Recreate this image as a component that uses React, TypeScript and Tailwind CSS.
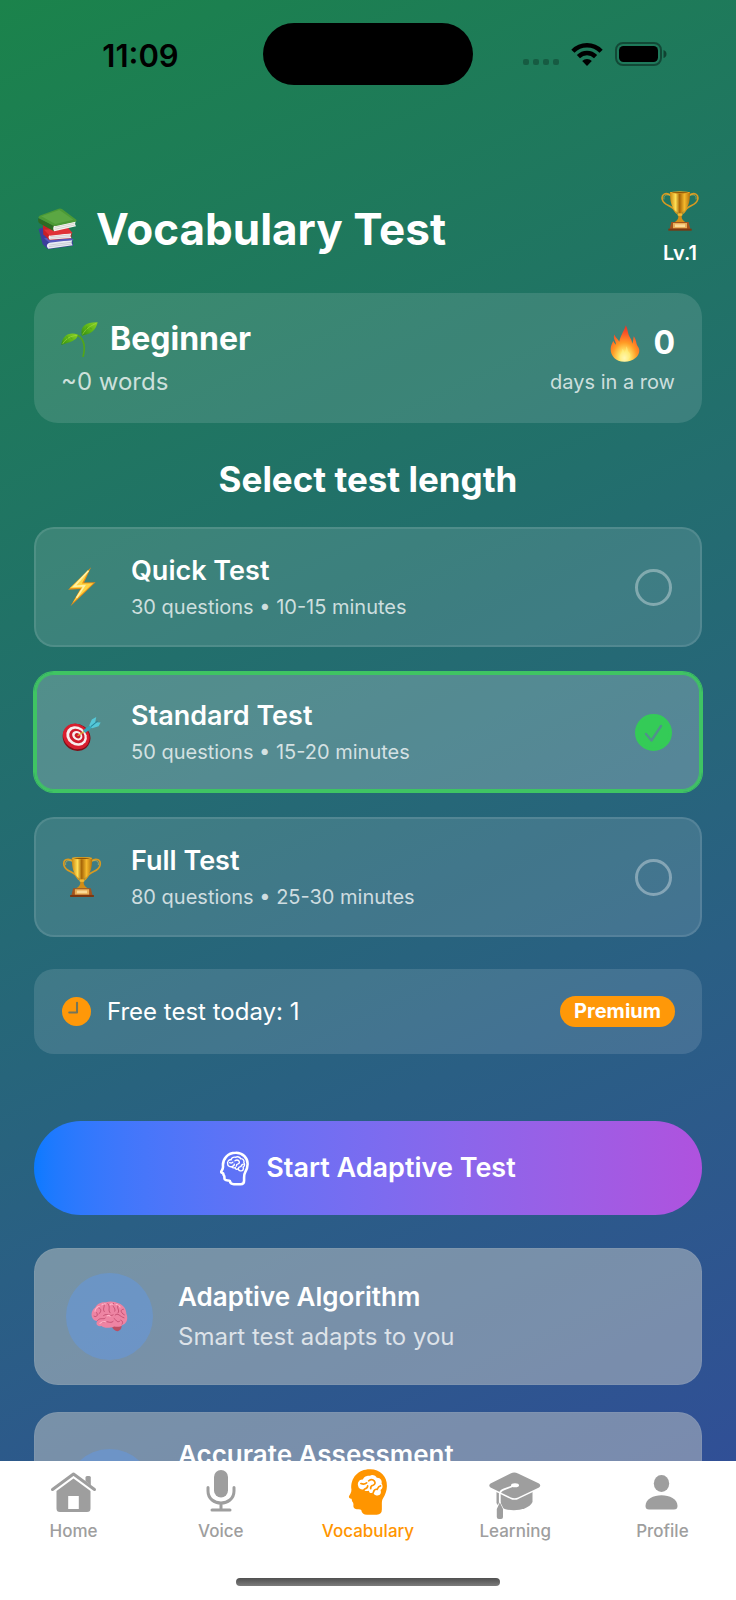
import { useState, type ReactNode } from "react";

type IconProps = { className?: string };

function BooksIcon({ className }: IconProps) {
  return (
    <svg viewBox="0 0 120 124" className={className} aria-hidden="true">
      <path d="M2 62 L14 108 L30 123 L105 112 L104 96 L30 92 L14 58 Z" fill="#3b3f9c" />
      <path d="M28 108 Q24 115 31 121 L104 111 Q98 104 103 96 L40 98 Z" fill="#e9ecf2" />
      <path d="M34 110 L100 102 M33 115 L101 107" stroke="#a9adba" strokeWidth="1.5" />
      <path d="M18 90 L90 84 L108 94 L34 103 Z" fill="#5658bd" />
      <path d="M14 40 L16 78 L34 96 L100 90 L101 74 L90 60 Z" fill="#c91f27" />
      <path d="M34 80 Q29 88 35 94 L100 89 Q95 82 100 75 Z" fill="#f3f1f2" />
      <path d="M37 85 L96 80 M37 90 L97 85" stroke="#b9afb3" strokeWidth="1.5" />
      <path d="M18 64 L90 58 L104 74 L35 82 Z" fill="#e03238" />
      <path d="M1 30 Q-1 38 3 44 L48 69 L50 52 Z" fill="#2c6b23" />
      <path d="M48 52 Q43 62 49 69 L114 54 Q109 47 113 39 Z" fill="#f4f4f0" />
      <path d="M50 57 L110 45 M50 63 L110 50" stroke="#b4b5ae" strokeWidth="1.5" />
      <path d="M2 25 Q4 22 10 20 L62 1 Q68 -1 73 3 L115 34 Q118 38 112 40 L54 53 Q48 54 43 51 L3 30 Q0 28 2 25 Z" fill="#4c9a36" />
      <path d="M10 24 L64 5 L106 34 L52 47 Z" fill="#62ad48" opacity=".7" />
    </svg>
  );
}

function TrophyIcon({ className }: IconProps) {
  return (
    <svg viewBox="0 0 114 118" className={className} aria-hidden="true">
      <defs>
        <linearGradient id="cup" x1="0" x2="1">
          <stop offset="0" stopColor="#c98610" />
          <stop offset=".28" stopColor="#ffdf55" />
          <stop offset=".48" stopColor="#a86607" />
          <stop offset=".72" stopColor="#f4b92c" />
          <stop offset="1" stopColor="#b3720c" />
        </linearGradient>
      </defs>
      <path d="M30 12 C14 1 0 9 4 25 C8 42 27 41 38 53 C43 60 45 66 50 67" fill="none" stroke="#d89a20" strokeWidth="5" />
      <path d="M84 12 C100 1 114 9 110 25 C106 42 87 41 76 53 C71 60 69 66 64 67" fill="none" stroke="#d89a20" strokeWidth="5" />
      <path d="M31 14 C18 7 6 11 9 24 M83 14 C96 7 108 11 105 24" fill="none" stroke="#f4ca55" strokeWidth="1.5" />
      <path d="M27 2 H87 C87 32 83 52 63 65 L61 80 H53 L51 65 C31 52 27 32 27 2 Z" fill="url(#cup)" />
      <ellipse cx="57" cy="3.5" rx="30" ry="3.5" fill="#e6a725" />
      <ellipse cx="57" cy="4" rx="24" ry="1.8" fill="#8d5306" />
      <ellipse cx="57" cy="70" rx="8" ry="4" fill="#f2b733" />
      <path d="M53 74 H61 Q62 88 77 94 H37 Q52 88 53 74 Z" fill="#d28d17" />
      <path d="M31 92 H83 L88 113 H26 Z" fill="#a3531e" />
      <path d="M36 95 H78 V111 H36 Z" fill="#e9ae58" />
      <path d="M42 99 H72 V107 H42 Z" fill="#fbd995" />
      <path d="M22 112 H92 V118 H22 Z" fill="#7c3710" />
    </svg>
  );
}

function SproutIcon({ className }: IconProps) {
  return (
    <svg viewBox="0 0 110 104" className={className} aria-hidden="true">
      <defs>
        <linearGradient id="leaf" x1="1" y1="0" x2="0" y2="1">
          <stop offset="0" stopColor="#8bd022" />
          <stop offset=".55" stopColor="#5ab317" />
          <stop offset="1" stopColor="#338a10" />
        </linearGradient>
      </defs>
      <path d="M66 102 C72 78 70 58 57 44 C50 38 40 38 32 42" fill="none" stroke="#52a51a" strokeWidth="5" strokeLinecap="round" />
      <path d="M64 40 C66 35 70 29 76 24" fill="none" stroke="#52a51a" strokeWidth="5" />
      <path d="M62 40 C55 12 76 0 109 1 C103 24 91 37 62 40 Z" fill="url(#leaf)" />
      <path d="M1 68 C3 43 24 27 50 38 C47 57 24 60 1 68 Z" fill="url(#leaf)" />
      <path d="M64 37 C74 20 88 11 105 4 M5 65 C15 48 31 41 47 40" fill="none" stroke="#a8df43" strokeWidth="1.8" />
      <path d="M76 25 L77 13 M85 17 L92 21 M20 51 L17 42 M28 46 L34 50" stroke="#418f12" strokeWidth="1.2" />
    </svg>
  );
}

function FlameIcon({ className }: IconProps) {
  return (
    <svg viewBox="0 0 92 112" className={className} aria-hidden="true">
      <defs>
        <radialGradient id="flame" cx=".48" cy=".9" r=".85">
          <stop offset="0" stopColor="#fffbd0" />
          <stop offset=".22" stopColor="#ffe76a" />
          <stop offset=".5" stopColor="#ff9c25" />
          <stop offset=".78" stopColor="#fb5b27" />
          <stop offset="1" stopColor="#e9382a" />
        </radialGradient>
      </defs>
      <path d="M44 111 C13 112 -3 88 2 65 C4 57 7 54 9 48 C12 56 16 58 17 60 C18 48 7 43 12 29 C17 40 25 45 27 51 C31 32 40 22 47 1 C54 15 52 27 61 40 C65 46 66 53 66 57 C70 50 69 42 71 34 C80 46 77 58 85 67 C96 86 74 111 44 111 Z" fill="url(#flame)" />
      <path d="M44 108 C28 108 24 96 32 87 C35 82 36 78 36 73 C41 76 42 79 42 84 C48 76 47 70 49 64 C54 72 52 80 58 84 C65 92 58 108 44 108 Z" fill="#fff18b" opacity=".45" />
    </svg>
  );
}

function BoltIcon({ className }: IconProps) {
  return (
    <svg viewBox="0 0 118 118" className={className} aria-hidden="true">
      <path d="M86 1 L18 67 L54 65 L25 116 L99 45 L65 46 Z" fill="#e98e16" />
      <path d="M81 7 L23 63 L59 61 L32 105 L92 48 L59 49 Z" fill="#ffd443" />
      <path d="M78 11 L36 57 L66 55 L43 91" fill="none" stroke="#fff1a4" strokeWidth="5" />
    </svg>
  );
}

function TargetIcon({ className }: IconProps) {
  return (
    <svg viewBox="0 0 118 118" className={className} aria-hidden="true">
      <ellipse cx="43" cy="75" rx="42" ry="39" transform="rotate(35 43 75)" fill="#7e1018" />
      <ellipse cx="42" cy="72" rx="41" ry="36" transform="rotate(35 42 72)" fill="#d81e2e" />
      <ellipse cx="43" cy="71" rx="32" ry="27" transform="rotate(35 43 71)" fill="#f8eeee" />
      <ellipse cx="44" cy="71" rx="24" ry="20" transform="rotate(35 44 71)" fill="#cf1c2c" />
      <ellipse cx="45" cy="70" rx="16" ry="13" transform="rotate(35 45 70)" fill="#f8eeee" />
      <ellipse cx="46" cy="70" rx="9" ry="7" transform="rotate(35 46 70)" fill="#c91b29" />
      <path d="M46 70 L68 56" stroke="#d6b23b" strokeWidth="4" />
      <path d="M62 54 L84 38 L91 45 L68 62 Z" fill="#35a5b8" />
      <path d="M80 40 L88 22 L101 15 L98 30 L114 31 L108 42 L89 48 Z" fill="#55c7d7" />
      <path d="M85 43 L105 27" stroke="#25859b" strokeWidth="3" />
    </svg>
  );
}

function BrainIcon({ className }: IconProps) {
  return (
    <svg viewBox="0 0 112 94" className={className} aria-hidden="true">
      <path d="M60 72 Q70 94 83 91 Q97 84 91 70 Z" fill="#bd4d62" />
      <path d="M8 57 C-3 45 1 28 13 20 C18 8 32 3 45 4 C60 -2 75 3 83 7 C101 13 107 27 107 38 C114 54 107 70 96 72 C88 81 77 78 70 77 C56 84 37 82 32 76 C18 79 12 67 20 60 C15 61 11 60 8 57 Z" fill="#ee84a3" />
      <path d="M9 46 C18 51 22 42 17 35 M20 59 C27 49 38 57 43 52 M22 20 C33 22 31 34 24 39 M38 7 C45 15 33 23 40 32 M51 8 C61 18 49 28 58 36 M68 7 C61 17 77 21 72 31 M83 12 C75 22 89 27 82 36 M98 25 C86 26 91 37 101 42 M38 44 C51 35 58 49 67 42 M73 43 C81 33 88 48 100 51 M35 65 C47 56 57 71 67 62 M70 53 C77 57 77 66 86 62 M90 58 C97 60 97 67 94 70" fill="none" stroke="#bb4668" strokeWidth="2.4" strokeLinecap="round" />
      <path d="M12 31 C13 22 20 17 25 17 M44 9 C40 8 35 10 33 12 M58 12 C62 7 66 9 67 12 M27 68 C34 62 39 61 45 63 M76 11 C80 10 86 14 88 18 M49 45 C53 42 56 44 58 46" fill="none" stroke="#ffb3c7" strokeWidth="3.5" strokeLinecap="round" />
    </svg>
  );
}

const headPath =
  "M62 1 C91 0 114 22 113 50 C113 65 107 77 102 86 C98 92 98 97 98 106 V120 Q98 135 83 135 H54 Q39 135 37 121 Q35 119 29 119 C15 119 13 113 14 105 C14 99 12 98 10 95 C9 92 10 91 8 88 C2 87 -1 85 1 80 C4 74 8 70 8 61 C4 26 29 1 62 1 Z";
const brainPath =
  "M28 50 C24 38 34 29 42 31 C46 19 58 19 63 20 C69 15 81 20 83 26 C94 25 100 36 97 43 C103 51 99 60 94 62 C98 73 91 79 84 78 C77 79 74 75 73 69 C67 74 59 70 60 64 C50 67 46 64 46 60 C36 62 29 57 28 50 Z";

function HeadFilledIcon({ className }: IconProps) {
  return (
    <svg viewBox="0 0 114 136" className={className} aria-hidden="true">
      <path d={headPath} fill="currentColor" />
      <path d={brainPath} fill="#fff" />
      <path d="M36 43 Q46 47 53 41 M46 60 Q57 56 56 50 M59 35 Q69 28 76 36 Q81 44 72 48 Q64 50 65 58 M73 69 Q75 59 84 60 M84 60 Q88 51 94 50" fill="none" stroke="currentColor" strokeWidth="5" strokeLinecap="round" />
    </svg>
  );
}

function HeadOutlineIcon({ className }: IconProps) {
  return (
    <svg viewBox="-5 -5 124 146" className={className} aria-hidden="true">
      <path d={headPath} fill="none" stroke="currentColor" strokeWidth="11" strokeLinejoin="round" />
      <path d={brainPath} fill="none" stroke="currentColor" strokeWidth="6" />
      <path d="M36 43 Q46 47 50 41 M46 60 Q57 56 56 50 M59 35 Q69 28 76 36 Q81 44 72 48 Q64 50 65 58 M73 69 Q75 59 84 60 M84 60 Q88 51 94 50" fill="none" stroke="currentColor" strokeWidth="6" strokeLinecap="round" />
    </svg>
  );
}

function ClockIcon({ className }: IconProps) {
  return (
    <svg viewBox="0 0 28 28" className={className} aria-hidden="true">
      <circle cx="14" cy="14" r="14" fill="#ff9808" />
      <path d="M14.5 5.5 V15 H7" fill="none" stroke="#74755a" strokeWidth="2" strokeLinecap="round" strokeLinejoin="round" />
    </svg>
  );
}

function WifiIcon({ className }: IconProps) {
  return (
    <svg viewBox="0 0 32 23" className={className} aria-hidden="true">
      <path d="M1.9 8.2 C9.6 .2 22.4 .2 30.1 8.2 M7.4 13.6 C12.2 8.7 19.8 8.7 24.6 13.6" fill="none" stroke="#000" strokeWidth="4.4" />
      <path d="M16 23 L11.2 18 C13.8 15.3 18.2 15.3 20.8 18 Z" fill="#000" />
    </svg>
  );
}

function BatteryIcon({ className }: IconProps) {
  return (
    <svg viewBox="0 0 52 24" className={className} aria-hidden="true">
      <rect x="1" y="1" width="45" height="22" rx="7" fill="none" stroke="#000" strokeOpacity=".4" strokeWidth="2" />
      <rect x="4" y="4" width="39" height="16" rx="4.5" fill="#000" />
      <path d="M48.5 8 Q51.5 9 51.5 12 Q51.5 15 48.5 16 Z" fill="#000" fillOpacity=".45" />
    </svg>
  );
}

function HomeIcon({ className }: IconProps) {
  return (
    <svg viewBox="0 0 52 50" className={className} aria-hidden="true">
      <path d="M4.5 20.5 L25.5 5 L46.5 20.5" fill="none" stroke="currentColor" strokeWidth="3" strokeLinecap="round" strokeLinejoin="round" />
      <path d="M37.5 12 V8.5 Q37.5 7 39 7 H41.3 Q42.8 7 42.8 8.5 V16.5 Z" fill="currentColor" />
      <path fillRule="evenodd" d="M25.5 9.5 L42.5 22 V39.5 Q42.5 43 39 43 H12 Q8.5 43 8.5 39.5 V22 Z M20.2 27 V40 H30.8 V27 Z" fill="currentColor" />
    </svg>
  );
}

function MicIcon({ className }: IconProps) {
  return (
    <svg viewBox="0 0 52 50" className={className} aria-hidden="true">
      <rect x="19" y="1" width="14" height="27.5" rx="7" fill="currentColor" />
      <path d="M13 18.5 V22 C13 38 39 38 39 22 V18.5 M26 34.5 V41 M17 41 H35" fill="none" stroke="currentColor" strokeWidth="3" strokeLinecap="round" />
    </svg>
  );
}

function CapIcon({ className }: IconProps) {
  return (
    <svg viewBox="0 0 52 50" className={className} aria-hidden="true">
      <path d="M7.5 20 V34 C12 43.5 38 44 43.5 33 V20 Z" fill="currentColor" />
      <path d="M25.3 3.5 Q27 3.5 29 4.5 L50 14.5 Q52.5 16.5 50 18.5 L29 28.5 Q25.5 30 22 28.5 L1.5 18.5 Q-1 16.5 1.5 14.5 L21.5 4.5 Q23.5 3.5 25.3 3.5 Z" fill="currentColor" stroke="#fff" strokeWidth="3" paintOrder="stroke" />
      <path d="M25.5 16.5 L15 20.3 Q10.8 22 10.8 25 V35" fill="none" stroke="#fff" strokeWidth="1.8" />
      <ellipse cx="26" cy="16.3" rx="4" ry="2" fill="#fff" />
      <path d="M10.8 33.5 L14 40 V48 Q14 50 12 50 H9.8 Q7.8 50 7.8 48 V40 Z" fill="currentColor" stroke="#fff" strokeWidth="1.2" paintOrder="stroke" />
    </svg>
  );
}

function ProfileIcon({ className }: IconProps) {
  return (
    <svg viewBox="0 0 52 50" className={className} aria-hidden="true">
      <ellipse cx="25.5" cy="14.5" rx="7.7" ry="8.5" fill="currentColor" />
      <path d="M9.5 37 C9.5 22.5 41.5 22.5 41.5 37 Q41.5 40.5 38 40.5 H13 Q9.5 40.5 9.5 37 Z" fill="currentColor" />
    </svg>
  );
}

const options = [
  { id: "quick", title: "Quick Test", detail: "30 questions • 10-15 minutes", Icon: BoltIcon },
  { id: "standard", title: "Standard Test", detail: "50 questions • 15-20 minutes", Icon: TargetIcon },
  { id: "full", title: "Full Test", detail: "80 questions • 25-30 minutes", Icon: TrophyIcon },
];

const tabs = [
  { label: "Home", Icon: HomeIcon },
  { label: "Voice", Icon: MicIcon },
  { label: "Vocabulary", Icon: HeadFilledIcon },
  { label: "Learning", Icon: CapIcon },
  { label: "Profile", Icon: ProfileIcon },
];

function StatusBar() {
  return (
    <div className="grid shrink-0 grid-cols-[1fr_210px_1fr] items-center pt-[23px] text-black">
      <span className="pt-1 pl-[18px] text-center text-[31px] leading-9 font-semibold">11:09</span>
      <div className="h-[62px] rounded-full bg-black" />
      <div className="flex items-center justify-center gap-3 pr-5">
        <div className="flex gap-1 pt-4">
          {[0, 1, 2, 3].map((dot) => (
            <span key={dot} className="size-[6px] rounded-xs bg-black/25" />
          ))}
        </div>
        <WifiIcon className="h-[23px] w-8" />
        <BatteryIcon className="h-6 w-[52px]" />
      </div>
    </div>
  );
}

function Feature({ title, detail, icon }: { title: string; detail?: string; icon?: ReactNode }) {
  return (
    <article className="flex items-center gap-[25px] rounded-3xl border border-white/5 bg-[#cbcdca]/48 px-[31px] py-6">
      <div className="flex size-[87px] shrink-0 items-center justify-center rounded-full bg-[#5f98ea]/45">{icon}</div>
      <div className="flex flex-col gap-1">
        <h3 className="text-[26px] leading-9 font-semibold">{title}</h3>
        {detail ? (
          <p className="text-2xl leading-[35px] text-white/75">{detail}</p>
        ) : (
          <div className="h-[70px]" />
        )}
      </div>
    </article>
  );
}

export default function App() {
  const [selected, setSelected] = useState("standard");

  return (
    <div className="flex h-screen flex-col bg-[linear-gradient(155deg,#1b834b_0%,#226f6c_38%,#2a5f84_66%,#324b9b_100%)] font-['Inter','Liberation_Sans',sans-serif] text-white">
      <StatusBar />

      <main className="min-h-0 flex-1 overflow-y-auto px-[34px] pt-[106px] [scrollbar-width:none]">
        <header className="flex items-center justify-between pr-[3px] pl-1">
          <div className="flex items-center gap-[18px]">
            <BooksIcon className="h-[42px] w-10" />
            <h1 className="text-[44px] leading-[54px] font-bold">Vocabulary Test</h1>
          </div>
          <div className="flex flex-col items-center gap-2">
            <TrophyIcon className="h-10 w-[38px]" />
            <span className="text-xl leading-7 font-semibold">Lv.1</span>
          </div>
        </header>

        <section className="mt-[26px] flex justify-between rounded-3xl bg-white/12 px-[27px] py-[26px]">
          <div className="flex flex-col gap-2">
            <div className="flex items-center gap-3">
              <SproutIcon className="h-[35px] w-[37px]" />
              <h2 className="text-[32px] leading-10 font-bold">Beginner</h2>
            </div>
            <p className="text-2xl leading-[30px] text-white/75">~0 words</p>
          </div>
          <div className="flex flex-col items-end gap-1 pt-1">
            <div className="flex items-center gap-3">
              <FlameIcon className="h-[37px] w-[31px]" />
              <span className="text-[32px] leading-10 font-bold">0</span>
            </div>
            <p className="text-xl leading-[30px] text-white/75">days in a row</p>
          </div>
        </section>

        <fieldset>
          <legend className="w-full pt-[34px] pb-[26px] text-center text-[35px] leading-[44px] font-bold">
            Select test length
          </legend>
          <div className="flex flex-col gap-[25px]">
            {options.map(({ id, title, detail, Icon }) => (
              <label
                key={id}
                className={
                  selected === id
                    ? "flex items-center gap-[29px] rounded-[20px] border-2 border-[#3fc463] bg-white/22 py-6 pr-7 pl-[26px] ring-1 ring-[#3fc463] inset-ring-1 inset-ring-[#3fc463]"
                    : "flex items-center gap-[29px] rounded-[20px] border-2 border-white/10 bg-white/12 py-6 pr-7 pl-[26px]"
                }
              >
                <Icon className="size-10 shrink-0" />
                <span className="flex flex-1 flex-col gap-1">
                  <span className="text-[27px] leading-9 font-semibold">{title}</span>
                  <span className="text-xl leading-7 text-white/75">{detail}</span>
                </span>
                <span className="grid size-[37px] shrink-0">
                  <input
                    type="radio"
                    name="length"
                    value={id}
                    checked={selected === id}
                    onChange={() => setSelected(id)}
                    className="col-start-1 row-start-1 m-0 size-full appearance-none rounded-full border-3 border-white/35 checked:border-[#34cb57] checked:bg-[#34cb57]"
                  />
                  {selected === id && (
                    <svg viewBox="0 0 37 37" className="pointer-events-none col-start-1 row-start-1" aria-hidden="true">
                      <path d="M11 20 L16.5 26.5 L26 12" fill="none" stroke="#51918c" strokeWidth="2.4" strokeLinecap="round" strokeLinejoin="round" />
                    </svg>
                  )}
                </span>
              </label>
            ))}
          </div>
        </fieldset>

        <section className="mt-8 flex items-center justify-between rounded-[20px] bg-white/12 px-[27px] py-[26px]">
          <div className="flex items-center gap-4 pl-px">
            <ClockIcon className="size-[29px]" />
            <span className="text-2xl leading-[33px]">Free test today: 1</span>
          </div>
          <span className="rounded-full bg-[#ff9808] px-[14px] text-xl leading-[31px] font-bold">Premium</span>
        </section>

        <button
          type="button"
          className="mt-[67px] flex w-full items-center justify-center gap-[17px] rounded-full bg-linear-to-r from-[#0a7aff] via-[#7a6cf0] to-[#af52de] py-[29px] text-[27px] leading-9 font-semibold"
        >
          <HeadOutlineIcon className="h-[35px] w-[29px]" />
          Start Adaptive Test
        </button>

        <div className="mt-[33px] flex flex-col gap-[27px] pb-8">
          <Feature title="Adaptive Algorithm" detail="Smart test adapts to you" icon={<BrainIcon className="h-[31px] w-[37px]" />} />
          <Feature title="Accurate Assessment" />
        </div>
      </main>

      <nav className="shrink-0 bg-white pt-2 pb-[14px]" aria-label="Main">
        <div className="grid grid-cols-5">
          {tabs.map(({ label, Icon }) => (
            <a
              key={label}
              href={"#" + label.toLowerCase()}
              aria-current={label === "Vocabulary" ? "page" : undefined}
              className={
                label === "Vocabulary"
                  ? "flex flex-col items-center text-[#ff9500]"
                  : "flex flex-col items-center text-[#9e9e9e]"
              }
            >
              <Icon className={label === "Vocabulary" ? "mb-1 h-[46px] w-[52px]" : "h-[50px] w-[52px]"} />
              <span className="text-[17px] leading-6 font-medium">{label}</span>
            </a>
          ))}
        </div>
        <div className="mx-auto mt-[35px] h-2 w-[36%] rounded-full bg-linear-to-b from-[#505050] to-[#7c7c7c]" />
      </nav>
    </div>
  );
}
